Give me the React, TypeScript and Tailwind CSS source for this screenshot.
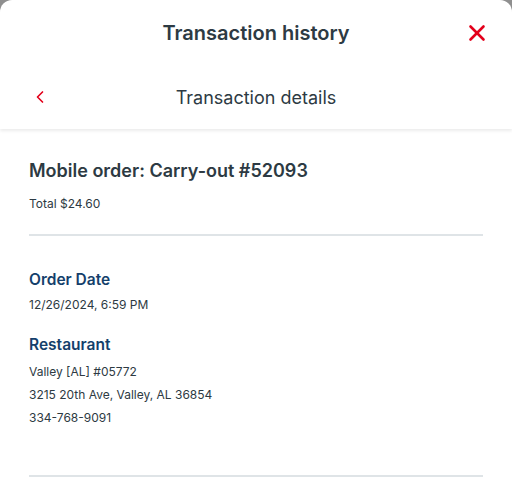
import { ChevronLeft, X } from "lucide-react";

export default function App() {
  return (
    <div className="h-[482px] w-[512px] overflow-hidden bg-[#8f8f8f]" style={{ fontFamily: "Inter, 'Noto Sans', sans-serif" }}>
      <div className="h-full rounded-t-[12px] bg-white">
        <div className="shadow-[0_2px_3px_rgba(0,0,0,0.08)]">
          <div className="relative flex h-[66px] items-center justify-center">
            <h1 className="text-[20px] font-semibold text-[#2d3a43]">Transaction history</h1>
            <X className="absolute right-[22px] top-[20px] h-[26px] w-[26px] text-[#e3001b]" strokeWidth={2.4} />
          </div>
          <div className="relative flex h-[63px] items-center justify-center">
            <ChevronLeft className="absolute left-[30px] top-[21px] h-[20px] w-[20px] text-[#e3001b]" strokeWidth={2} />
            <h2 className="text-[18px] font-normal text-[#2d3a43]">Transaction details</h2>
          </div>
        </div>
        <div className="px-[29px] pt-[28px]">
          <h3 className="text-[18px] font-semibold text-[#2d3a43]">Mobile order: Carry-out #52093</h3>
          <p className="mt-[11px] text-[12px] text-[#2d3a43]">Total $24.60</p>
          <div className="mt-[21px] h-[2px] bg-[#dfe4e7]" />
          <h4 className="mt-[32px] text-[15.5px] font-semibold text-[#143f6b]">Order Date</h4>
          <p className="mt-[5px] text-[12px] text-[#2d3a43]">12/26/2024, 6:59 PM</p>
          <h4 className="mt-[19px] text-[15.5px] font-semibold text-[#143f6b]">Restaurant</h4>
          <div className="mt-[6px] flex flex-col gap-[5px] text-[12px] text-[#2d3a43]">
            <p>Valley [AL] #05772</p>
            <p>3215 20th Ave, Valley, AL 36854</p>
            <p>334-768-9091</p>
          </div>
          <div className="mt-[48px] h-[2px] bg-[#dfe4e7]" />
        </div>
      </div>
    </div>
  );
}
